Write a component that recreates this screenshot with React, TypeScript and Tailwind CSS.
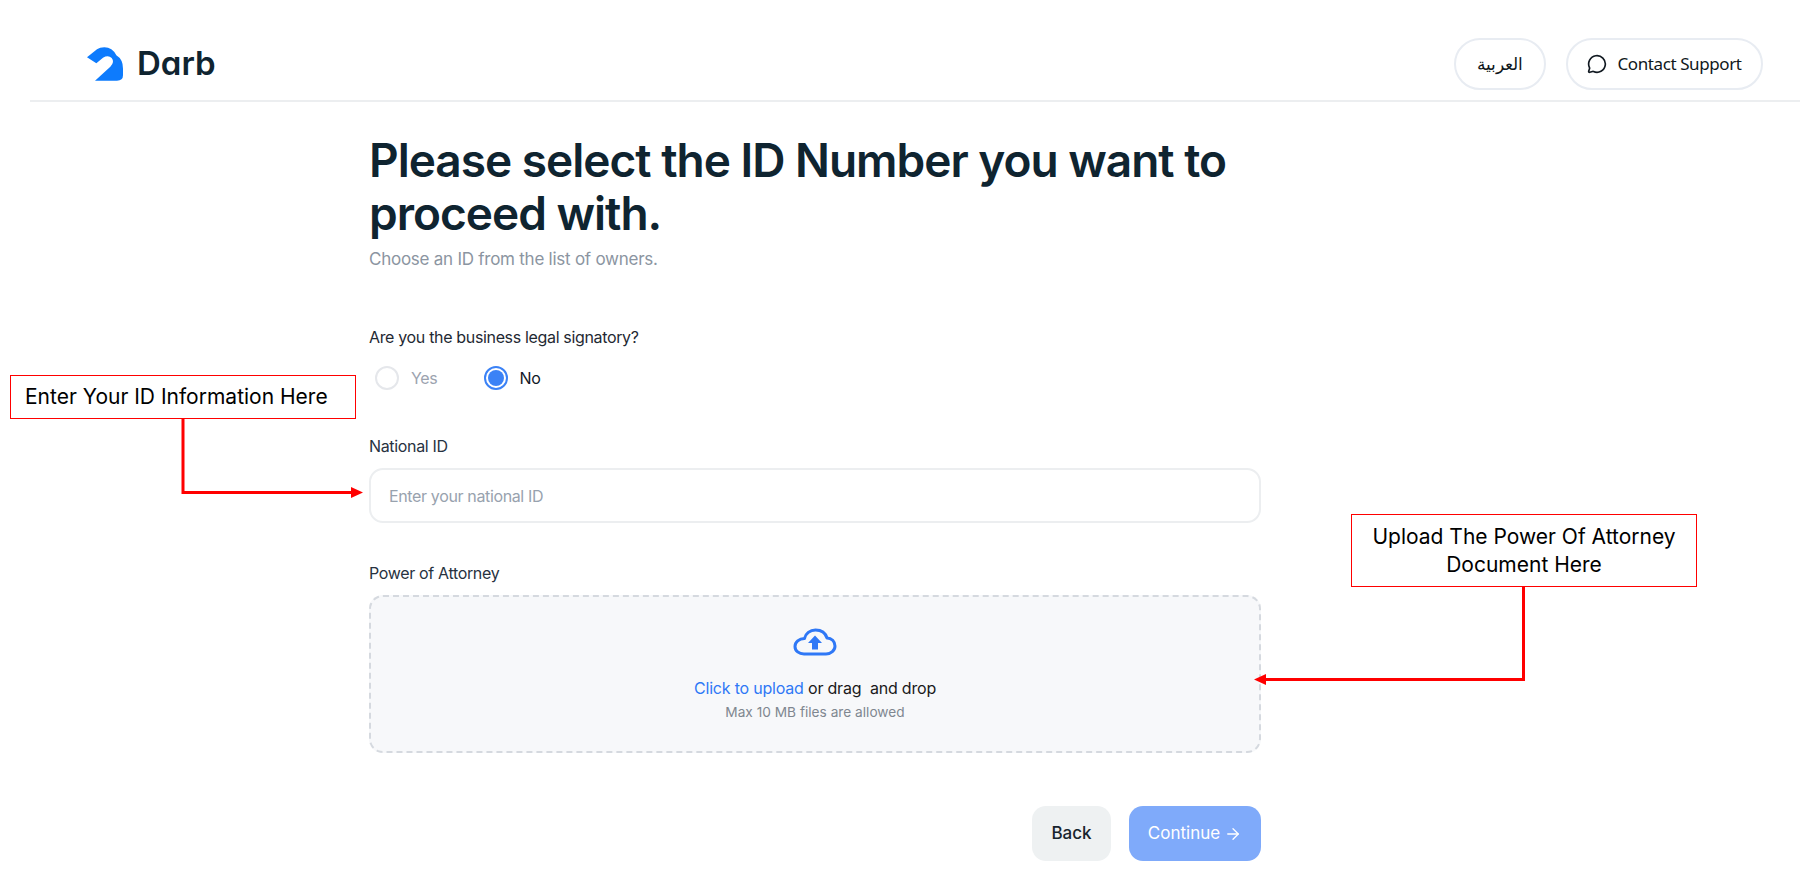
import React from 'react';
import { ArrowRight, MessageCircle } from 'lucide-react';

const DarbLogo = () => (
  <svg width="36" height="34" viewBox="82 82 108 100" className="shrink-0">
    <path
      d="M82 112 L112 88 Q120 82 134 82 Q158 82 170 106 Q190 118 190 146 L190 166 Q190 182 172 182 L106 182 L152 140 Q166 126 156 114 Q146 104 130 113 L110 130 Z"
      fill="#0d7bfd"
    />
  </svg>
);

const UploadCloud = () => (
  <svg width="44" height="28" viewBox="0 0 44 28" fill="none">
    <path
      d="M11 26 H33 C38 26 42 22.500 42 18 C42 13.500 38.500 10 34 10 C32.500 5 28 2 22.500 2 C17 2 12.500 5.500 11.500 10.500 C6 10.500 2 14 2 18.500 C2 23 6 26 11 26 Z"
      stroke="#2f78f6"
      strokeWidth="3"
      strokeLinejoin="round"
    />
    <path d="M22 7.500 L29 15 H25 V21.500 H19 V15 H15 Z" fill="#2f78f6" />
  </svg>
);

const Radio = ({ label, checked }: { label: string; checked?: boolean }) => (
  <div className="flex items-center gap-3">
    {checked ? (
      <span className="w-6 h-6 rounded-full border-2 border-[#3b82f6] flex items-center justify-center">
        <span className="w-4 h-4 rounded-full bg-[#3b82f6]" />
      </span>
    ) : (
      <span className="w-6 h-6 rounded-full border-2 border-[#e5e7eb]" />
    )}
    <span className={`text-[16px] tracking-[-0.3px] ${checked ? 'text-[#111827]' : 'text-[#9ca3af]'}`}>{label}</span>
  </div>
);

const Callout = ({ className, children }: { className: string; children: React.ReactNode }) => (
  <div
    className={`absolute border border-[#ff0000] bg-white text-black text-[21px] leading-[28px] font-['Inter',sans-serif] flex items-center text-center ${className}`}
  >
    {children}
  </div>
);

export default function App() {
  return (
    <div className="relative h-[892px] overflow-hidden bg-white font-['Inter',sans-serif]">
      {/* Header */}
      <header className="ml-[30px] mr-[4px] h-[102px] border-b-2 border-[#eceef0] flex items-center justify-between pl-[57px] pr-[37px] pt-[30px] pb-[3px]">
        <div className="flex items-center gap-[14px]">
          <DarbLogo />
          <span className="text-[33px] leading-none font-semibold text-[#0f2430] [font-feature-settings:'cv11']">Darb</span>
        </div>
        <div className="flex items-center gap-[20px] font-['Noto_Sans',sans-serif] text-[#101820]">
          <button className="w-[92px] h-[52px] rounded-full border-2 border-[#e8ecf2] text-[17px]">العربية</button>
          <button className="w-[197px] h-[52px] rounded-full border-2 border-[#e8ecf2] text-[17px] flex items-center justify-center gap-[10px]">
            <MessageCircle size={20} strokeWidth={2} />
            <span className="tracking-[-0.4px]">Contact Support</span>
          </button>
        </div>
      </header>

      {/* Form */}
      <main className="ml-[369px] w-[892px] pt-[32px]">
        <h1 className="text-[46px] leading-[53px] font-semibold tracking-[-1px] text-[#0f2430] w-[880px]">
          Please select the ID Number you want to proceed with.
        </h1>
        <p className="mt-[6px] text-[17px] leading-[26px] tracking-[-0.25px] text-[#8b95a1]">Choose an ID from the list of owners.</p>

        <p className="mt-[53px] text-[16px] leading-[24px] tracking-[-0.34px] text-[#1f2933]">Are you the business legal signatory?</p>
        <div className="mt-[17px] ml-[6px] flex items-center gap-[46px]">
          <Radio label="Yes" />
          <Radio label="No" checked />
        </div>

        <label className="block mt-[44px] text-[16px] leading-[24px] tracking-[-0.34px] text-[#27323f]">National ID</label>
        <div className="mt-[10px] h-[55px] rounded-[14px] border-2 border-[#eceef0] flex items-center px-[18px] text-[16px] tracking-[-0.36px] text-[#98a2ae]">
          Enter your national ID
        </div>

        <label className="block mt-[38px] text-[16px] leading-[24px] tracking-[-0.34px] text-[#27323f]">Power of Attorney</label>
        <div className="mt-[10px] h-[158px] rounded-[14px] border-2 border-dashed border-[#d5d9df] bg-[#f7f8fa] flex flex-col items-center pt-[31px]">
          <UploadCloud />
          <p className="mt-[20px] text-[16px] leading-[24px] tracking-[-0.2px] text-[#1a1a1a]">
            <span className="text-[#2f78f6]">Click to upload</span> or drag&nbsp; and drop
          </p>
          <p className="mt-[2px] text-[13.700px] leading-[20px] text-[#7f8790]">Max 10 MB files are allowed</p>
        </div>

        <div className="mt-[53px] flex justify-end gap-[18px]">
          <button className="w-[79px] h-[55px] rounded-[14px] bg-[#eef1f2] text-[17px] font-medium text-[#17242e]">Back</button>
          <button className="w-[132px] h-[55px] rounded-[14px] bg-[#7faafa] text-[17px] text-white flex items-center justify-center gap-[4px]">
            Continue
            <ArrowRight size={18} strokeWidth={1.75} />
          </button>
        </div>
      </main>

      {/* Annotations */}
      <svg className="absolute inset-0 pointer-events-none" width="1804" height="892" fill="none">
        <path d="M183 419 V492.500 H352" stroke="#ff0000" strokeWidth="3" />
        <path d="M351 487 L363 492.500 L351 498 Z" fill="#ff0000" />
        <path d="M1523.500 587 V679.500 H1264" stroke="#ff0000" strokeWidth="3" />
        <path d="M1266 674 L1254 679.500 L1266 685 Z" fill="#ff0000" />
      </svg>
      <Callout className="left-[10px] top-[375px] w-[346px] h-[44px] justify-start pl-[14px]">Enter Your ID Information Here</Callout>
      <Callout className="left-[1351px] top-[514px] w-[346px] h-[73px] justify-center px-4">
        Upload The Power Of Attorney Document Here
      </Callout>
    </div>
  );
}
